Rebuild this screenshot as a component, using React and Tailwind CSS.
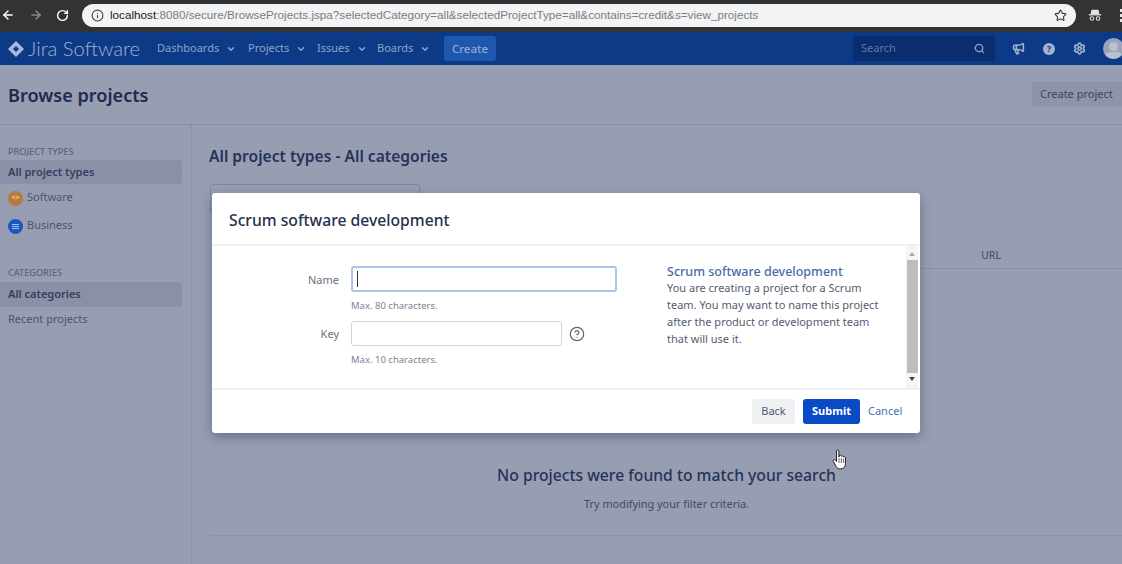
import React from "react";
import { ArrowLeft, ArrowRight, RotateCw, Info, Star, ChevronDown, Search, Megaphone, Settings, CircleHelp } from "lucide-react";

function NavItem({ label, className }) {
  return (
    <div className={"flex items-center gap-[7px] text-[11px] text-[#8fa3c8] " + className}>
      <span>{label}</span>
      <ChevronDown size={10} strokeWidth={3.500} />
    </div>
  );
}

function Hand() {
  return (
    <svg width="16" height="22" viewBox="0 0 16 22">
      <path d="M4.500 2.200c0-1.600 2.400-1.600 2.400 0V8l.3-1.200c.6-.9 2.100-.7 2.200.5.5-.8 2-.5 2.100.6.6-.6 2-.3 2 1v5.600c0 3-1.600 5.400-4.600 5.400H8c-2 0-3-1-4-2.600L1.400 12.600c-.8-1.500 1-2.600 2-1.400l1.100 1.300z" fill="#fff" stroke="#222" strokeWidth="1" strokeLinejoin="round" />
      <path d="M7 9v5M9.300 9v5M11.600 9.500V14" stroke="#222" strokeWidth=".7" />
    </svg>
  );
}

export default function App() {
  return (
    <div className="relative flex h-[564px] w-[1122px] flex-col overflow-hidden bg-[#979eb2] font-['Noto_Sans','Open_Sans',sans-serif] text-[#1f2a4d]">
      <div className="flex h-[32px] shrink-0 items-center bg-[#323335] pb-[2px]">
        <div className="flex w-[82px] shrink-0 items-center pl-[1px] text-white">
          <ArrowLeft size={14} strokeWidth={2.400} />
          <ArrowRight size={14} strokeWidth={2.400} className="ml-[14px] text-[#8a8b8d]" />
          <RotateCw size={13} strokeWidth={2.600} className="ml-[13px]" />
        </div>
        <div className="flex h-[23px] w-[994px] shrink-0 items-center rounded-full bg-[#f2f3f5] pl-[9px] pr-[9px] font-['Liberation_Sans',sans-serif] text-[11.700px] text-[#7b7d80]">
          <Info size={13} className="text-[#444]" />
          <span className="ml-[6px] truncate"><span className="text-[#222]">localhost</span>:8080/secure/BrowseProjects.jspa?selectedCategory=all&selectedProjectType=all&contains=credit&s=view_projects</span>
          <Star size={13} strokeWidth={2} className="ml-auto shrink-0 text-[#333]" />
        </div>
        <svg width="14" height="14" viewBox="0 0 16 16" className="ml-[12px] shrink-0" fill="#e4e4e4">
          <path d="M4 2h8l1 5H3z" /><rect x="1" y="7" width="14" height="1.500" />
          <circle cx="4.500" cy="12" r="2" fill="none" stroke="#e4e4e4" strokeWidth="1.200" /><circle cx="11.500" cy="12" r="2" fill="none" stroke="#e4e4e4" strokeWidth="1.200" />
        </svg>
        <div className="ml-[18px] flex shrink-0 flex-col gap-[2px]">
          <div className="h-[3px] w-[3px] bg-[#e4e4e4]" /><div className="h-[3px] w-[3px] bg-[#e4e4e4]" /><div className="h-[3px] w-[3px] bg-[#e4e4e4]" />
        </div>
      </div>

      <div className="flex h-[33px] shrink-0 items-center bg-[#0d3a87]">
        <svg width="16" height="16" viewBox="0 0 16 16" className="ml-[8px] shrink-0" fill="#a9b8d4">
          <path d="M8 0 16 8 8 16 0 8z" /><path d="M8 5 11 8 8 11 5 8z" fill="#0d3a87" />
        </svg>
        <span className="ml-[4px] w-[112px] shrink-0 whitespace-nowrap font-['Lato',sans-serif] text-[20.200px] font-light text-[#a3b3d0]">Jira Software</span>
        <NavItem label="Dashboards" className="ml-[17px] w-[91px] shrink-0" />
        <NavItem label="Projects" className="w-[69px] shrink-0" />
        <NavItem label="Issues" className="w-[60px] shrink-0" />
        <NavItem label="Boards" className="w-[67px] shrink-0" />
        <div className="flex h-[25px] w-[52px] shrink-0 items-center justify-center rounded-[3px] bg-[#1f56ae] text-[11.500px] font-medium text-[#8fa9d6]">Create</div>
        <div className="ml-[357px] flex h-[25px] w-[142px] shrink-0 items-center justify-between bg-[#0b2d6e] pl-[8px] pr-[10px] text-[11px] text-[#5f78a8]">
          <span>Search</span>
          <Search size={11} strokeWidth={3} className="text-[#8fa3c8]" />
        </div>
        <Megaphone size={13} strokeWidth={2.800} className="ml-[17px] shrink-0 text-[#a3b3d0]" />
        <svg width="12" height="12" viewBox="0 0 14 14" className="ml-[18px] shrink-0">
          <circle cx="7" cy="7" r="7" fill="#a3b3d0" />
          <text x="7" y="10.500" textAnchor="middle" fontSize="10" fontWeight="700" fill="#0d3a87">?</text>
        </svg>
        <Settings size={13} strokeWidth={3} className="ml-[18px] shrink-0 text-[#a3b3d0]" />
        <div className="relative ml-[17px] h-[21px] w-[21px] shrink-0 overflow-hidden rounded-full bg-[#9aa5bb]">
          <div className="absolute left-[6px] top-[4px] h-[9px] w-[9px] rounded-full bg-[#b8c1d2]" />
          <div className="absolute left-[2px] top-[14px] h-[10px] w-[17px] rounded-full bg-[#b8c1d2]" />
        </div>
      </div>

      <div className="flex h-[60px] shrink-0 items-center justify-between border-b border-[#8b92a6] pl-[8px]">
        <h1 className="pt-[2px] text-[18.100px] font-semibold text-[#1e2a4e]">Browse projects</h1>
        <div className="mb-[1px] flex h-[25px] w-[90px] items-center whitespace-nowrap bg-[#8e95a9] pl-[8px] text-[11px] text-[#3a4566]">Create project</div>
      </div>

      <div className="flex min-h-0 flex-1">
        <aside className="w-[192px] shrink-0 border-r border-[#8b92a6] pl-[8px] pr-[9px] pt-[20px] text-[11px] text-[#4a5573]">
          <div className="h-[14px] text-[9.100px] font-medium uppercase leading-[14px] text-[#5a6480]">Project types</div>
          <div className="-ml-[8px] mt-[1px] flex h-[24px] w-[182px] items-center rounded-r-[3px] bg-[#8a91a6] pl-[8px] font-semibold text-[#333e60]">All project types</div>
          <div className="mt-[1px] flex h-[25px] items-center gap-[4px]">
            <span className="mt-[2px] flex h-[15px] w-[15px] items-center justify-center rounded-full bg-[#b8793c] text-[7px] font-bold text-[#e3d5c5]">&lt;&gt;</span>
            Software
          </div>
          <div className="mt-[3px] flex h-[25px] items-center gap-[4px]">
            <span className="mt-[2px] flex h-[15px] w-[15px] flex-col items-center justify-center gap-[1px] rounded-full bg-[#1d56c2]">
              <span className="h-[1px] w-[7px] bg-[#a9bfe6]" /><span className="h-[1px] w-[7px] bg-[#a9bfe6]" /><span className="h-[1px] w-[7px] bg-[#a9bfe6]" />
            </span>
            Business
          </div>
          <div className="mt-[28px] h-[14px] text-[9.100px] font-medium uppercase leading-[14px] text-[#5a6480]">Categories</div>
          <div className="-ml-[8px] mt-[2px] flex h-[25px] w-[182px] items-center rounded-r-[3px] bg-[#8a91a6] pl-[8px] font-semibold text-[#333e60]">All categories</div>
          <div className="flex h-[25px] items-center">Recent projects</div>
        </aside>

        <main className="relative min-w-0 flex-1 pl-[18px] pt-[20px]">
          <h2 className="-ml-[1px] text-[15.600px] font-semibold leading-[22px] text-[#27325a]">All project types - All categories</h2>
          <div className="mt-[17px] h-[30px] w-[210px] rounded-[3px] border border-[#7f869b]" />
          <div className="mt-[25px] flex h-[30px] justify-end border-b border-[#8b92a6] pr-[121px] pt-[8px] text-[10.500px] font-medium leading-[16px] text-[#4a5573]">URL</div>
          <div className="mt-[194px] w-[913px] text-center">
            <div className="text-[15.700px] font-medium leading-[24px] text-[#27325a]">No projects were found to match your search</div>
            <div className="mt-[9px] text-[10.900px] leading-[16px] text-[#3f4a6b]">Try modifying your filter criteria.</div>
          </div>
          <div className="mt-[23px] w-[913px] border-t border-[#8b92a6]" />
        </main>
      </div>

      <div className="absolute left-[212px] top-[193px] flex h-[240px] w-[708px] flex-col rounded-[3px] bg-white shadow-[0_4px_12px_rgba(23,32,62,0.35)]">
        <div className="flex h-[53px] shrink-0 items-center border-b-2 border-[#f0f1f3] pl-[17px] pt-[4px] text-[15.700px] font-medium text-[#25304f]">Scrum software development</div>
        <div className="flex min-h-0 flex-1">
          <div className="flex min-w-0 flex-1 pt-[20px]">
            <div className="w-[127px] shrink-0 pt-[2px] text-right text-[11px] text-[#6b7080]">
              <div className="flex h-[25px] items-center justify-end">Name</div>
              <div className="mt-[29px] flex h-[25px] items-center justify-end">Key</div>
            </div>
            <div className="ml-[12px] w-[316px] shrink-0">
              <div className="flex h-[26px] w-[266px] items-center rounded-[3px] border-2 border-[#a9c3ea] pl-[4px]">
                <div className="h-[16px] w-[1px] bg-[#333]" />
              </div>
              <div className="mt-[6px] h-[16px] text-[9.500px] leading-[16px] text-[#7d8293]">Max. 80 characters.</div>
              <div className="mt-[7px] flex items-center">
                <div className="h-[25px] w-[211px] rounded-[3px] border border-[#d4d5d8]" />
                <CircleHelp size={16} strokeWidth={1.800} className="ml-[7px] text-[#666]" />
              </div>
              <div className="mt-[6px] h-[16px] text-[9.500px] leading-[16px] text-[#7d8293]">Max. 10 characters.</div>
            </div>
            <div className="-mt-[3px] w-[225px] shrink-0">
              <div className="text-[12.500px] font-medium leading-[17px] text-[#4a6aa8]">Scrum software development</div>
              <p className="-mt-[1px] w-[225px] text-[11px] leading-[17px] text-[#555c70]">You are creating a project for a Scrum team. You may want to name this project after the product or development team that will use it.</p>
            </div>
          </div>
          <div className="mr-[2px] flex w-[12px] shrink-0 flex-col items-center bg-[#f5f5f5] pb-[2px] pt-[6px]">
            <div className="h-0 w-0 border-x-[3px] border-b-[4px] border-x-transparent border-b-[#a8a8a8]" />
            <div className="mt-[4px] h-[113px] w-[11px] bg-[#bdbdbd]" />
            <div className="mt-[4px] h-0 w-0 border-x-[3px] border-t-[4px] border-x-transparent border-t-[#444]" />
          </div>
        </div>
        <div className="flex h-[45px] shrink-0 items-center justify-end border-t-2 border-[#f0f1f3] pr-[17px]">
          <div className="flex h-[25px] w-[43px] items-center justify-center rounded-[3px] bg-[#eff0f2] text-[11px] text-[#505870]">Back</div>
          <div className="ml-[8px] flex h-[25px] w-[57px] items-center justify-center rounded-[3px] bg-[#0a4ac6] text-[11px] font-bold text-white">Submit</div>
          <div className="ml-[8px] w-[35px] text-[11px] text-[#4a6fb8]">Cancel</div>
        </div>
      </div>

      <div className="absolute left-[832px] top-[449px]"><Hand /></div>
    </div>
  );
}
